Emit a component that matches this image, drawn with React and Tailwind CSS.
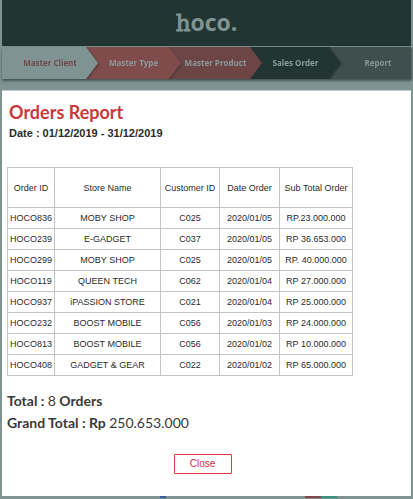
const steps = [
  { label: 'Master Client', tone: 'bg-[#7f9492] text-[#70484a]' },
  { label: 'Master Type', tone: 'bg-[#804b4b] text-[#8a9a99]' },
  { label: 'Master Product', tone: 'bg-[#6e4545] text-[#8a9a99]' },
  { label: 'Sales Order', tone: 'bg-[#223533] text-[#8a9d9b]' },
  { label: 'Report', tone: 'bg-[#3e4f4e] text-[#839795]' },
];

const layers = ['z-50', 'z-40', 'z-30', 'z-20', 'z-10'];

const columns = ['Order ID', 'Store Name', 'Customer ID', 'Date Order', 'Sub Total Order'];

const orders = [
  ['HOCO836', 'MOBY SHOP', 'C025', '2020/01/05', 'RP.23.000.000'],
  ['HOCO239', 'E-GADGET', 'C037', '2020/01/05', 'RP 36.653.000'],
  ['HOCO299', 'MOBY SHOP', 'C025', '2020/01/05', 'RP. 40.000.000'],
  ['HOCO119', 'QUEEN TECH', 'C062', '2020/01/04', 'RP 27.000.000'],
  ['HOCO937', 'iPASSION STORE', 'C021', '2020/01/04', 'RP 25.000.000'],
  ['HOCO232', 'BOOST MOBILE', 'C056', '2020/01/03', 'RP 24.000.000'],
  ['HOCO813', 'BOOST MOBILE', 'C056', '2020/01/02', 'RP 10.000.000'],
  ['HOCO408', 'GADGET & GEAR', 'C022', '2020/01/02', 'RP 65.000.000'],
];

function Steps() {
  return (
    <nav className="mt-px">
      <ol className="grid h-8 grid-cols-[84fr_83fr_81fr_79fr_82fr] shadow-[0_2px_3px_rgba(60,80,78,0.6)]">
        {steps.map((step, i) => {
          const last = i === steps.length - 1;
          return (
            <li key={step.label} className={`relative min-w-0 drop-shadow-[1px_1px_1px_rgba(40,50,50,0.55)] ${layers[i]}`}>
              <a
                href="#"
                className={`flex h-full items-center justify-center font-['Open_Sans',sans-serif] text-[8px] font-bold whitespace-nowrap ${step.tone} ${
                  last ? 'pl-4' : '-mr-3 [clip-path:polygon(0_0,calc(100%-12px)_0,100%_50%,calc(100%-12px)_100%,0_100%)]'
                }`}
              >
                {step.label}
              </a>
            </li>
          );
        })}
      </ol>
    </nav>
  );
}

function OrdersTable() {
  return (
    <table className="mt-[25px] w-[345px] table-fixed border-collapse text-center text-[9px] leading-3 text-[#2b2b2b]">
      <colgroup>
        <col className="w-[47px]" />
        <col className="w-[106px]" />
        <col className="w-[59px]" />
        <col className="w-[60px]" />
        <col className="w-[73px]" />
      </colgroup>
      <thead>
        <tr className="h-10">
          {columns.map((name) => (
            <th key={name} className="border border-[#c4c4c4] p-0 font-normal whitespace-nowrap">{name}</th>
          ))}
        </tr>
      </thead>
      <tbody>
        {orders.map((row) => (
          <tr key={row[0]} className="h-[21px]">
            {row.map((cell, i) => (
              <td key={i} className="border border-[#c4c4c4] p-0 whitespace-nowrap">{cell}</td>
            ))}
          </tr>
        ))}
      </tbody>
    </table>
  );
}

export default function App() {
  return (
    <div className="min-h-screen bg-[#7f9492] px-0.5 font-['Liberation_Sans',Arial,sans-serif]">
      <header className="flex h-[46px] items-center justify-center bg-[#223533]">
        <span className="font-['Open_Sans',sans-serif] text-[23px] leading-none font-bold text-[#7f9492]">
          <span className="font-['DejaVu_Serif',serif] font-normal [-webkit-text-stroke:1px_#7f9492]">h</span>oco.
        </span>
      </header>
      <Steps />
      <main className="mt-[11px] border-t border-[#c3c9c8] bg-white px-[5px] pt-[9px] pb-[22px]">
        <h1 className="pl-0.5 font-['Lato',sans-serif] text-[18px] leading-6 font-bold text-[#c9393b]">Orders Report</h1>
        <p className="pl-0.5 text-[11px] leading-[18px] font-bold text-[#2b2b2b]">Date : 01/12/2019 - 31/12/2019</p>
        <OrdersTable />
        <div className="mt-[14px] font-['Lato',sans-serif] text-[14px] leading-[22px] font-bold text-[#3b3838]">
          <p>Total : <span className="font-normal">8</span> Orders</p>
          <p>Grand Total : Rp <span className="font-normal">250.653.000</span></p>
        </div>
        <div className="mt-5 flex justify-center pr-2">
          <button type="button" className="h-5 w-[58px] rounded-[1px] border border-[#e0383c] text-[10px] leading-none text-[#dc2a3c]">Close</button>
        </div>
      </main>
      <div className="flex h-0.5 justify-between pr-[74px] pl-[158px]">
        <div className="w-1.5 bg-[#3a609c]" />
        <div className="flex">
          <div className="w-4 bg-[#80464a]" />
          <div className="w-4 bg-[#35907e]" />
        </div>
      </div>
    </div>
  );
}
